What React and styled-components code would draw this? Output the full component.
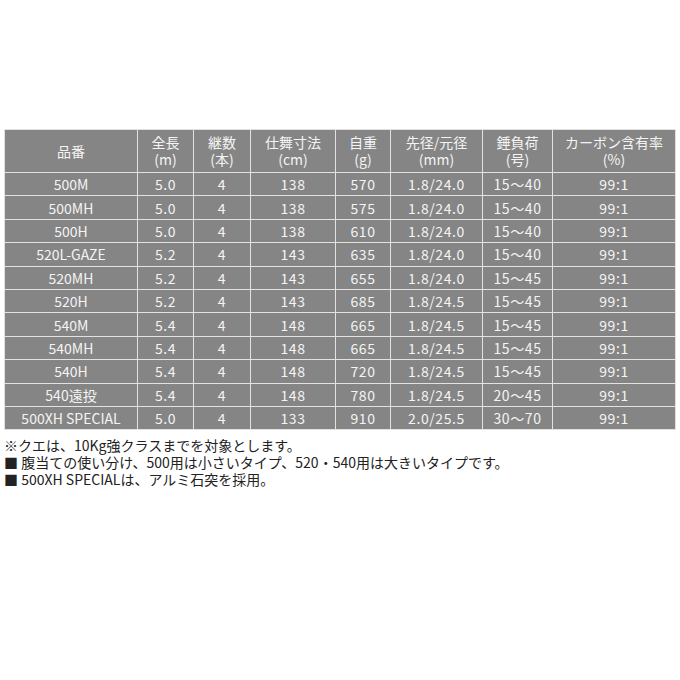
import styled, { createGlobalStyle } from "styled-components";

const GlobalStyle = createGlobalStyle`
  html, body {
    margin: 0;
    padding: 0;
    background: #fff;
  }
  body {
    font-family: "Noto Sans CJK JP", "Noto Sans", sans-serif;
  }
`;

const columns = [
  { key: "name", label: ["品番"], width: 133 },
  { key: "len", label: ["全長", "(m)"], width: 56 },
  { key: "pcs", label: ["継数", "(本)"], width: 57 },
  { key: "close", label: ["仕舞寸法", "(cm)"], width: 85 },
  { key: "weight", label: ["自重", "(g)"], width: 55 },
  { key: "dia", label: ["先径/元径", "(mm)"], width: 92 },
  { key: "sinker", label: ["錘負荷", "(号)"], width: 70 },
  { key: "carbon", label: ["カーボン含有率", "(%)"], width: 123 },
];

const rows = [
  ["500M", "5.0", "4", "138", "570", "1.8/24.0", "15〜40", "99:1"],
  ["500MH", "5.0", "4", "138", "575", "1.8/24.0", "15〜40", "99:1"],
  ["500H", "5.0", "4", "138", "610", "1.8/24.0", "15〜40", "99:1"],
  ["520L-GAZE", "5.2", "4", "143", "635", "1.8/24.0", "15〜40", "99:1"],
  ["520MH", "5.2", "4", "143", "655", "1.8/24.0", "15〜45", "99:1"],
  ["520H", "5.2", "4", "143", "685", "1.8/24.5", "15〜45", "99:1"],
  ["540M", "5.4", "4", "148", "665", "1.8/24.5", "15〜45", "99:1"],
  ["540MH", "5.4", "4", "148", "665", "1.8/24.5", "15〜45", "99:1"],
  ["540H", "5.4", "4", "148", "720", "1.8/24.5", "15〜45", "99:1"],
  ["540遠投", "5.4", "4", "148", "780", "1.8/24.5", "20〜45", "99:1"],
  ["500XH SPECIAL", "5.0", "4", "133", "910", "2.0/25.5", "30〜70", "99:1"],
];

const notes = [
  "※クエは、10Kg強クラスまでを対象とします。",
  "■ 腹当ての使い分け、500用は小さいタイプ、520・540用は大きいタイプです。",
  "■ 500XH SPECIALは、アルミ石突を採用。",
];

const Page = styled.div`
  padding: 129px 5px 0 4px;
`;

const SpecTable = styled.table`
  width: 671px;
  border-collapse: collapse;
  table-layout: fixed;
  color: #f4f4f4;
`;

const HeadCell = styled.th`
  height: 42px;
  padding: 0;
  background: #858585;
  border: 1.5px solid #e2e2e2;
  font-size: 14px;
  font-weight: 400;
  line-height: 17px;
  text-align: center;
  vertical-align: middle;
`;

const HeadLine = styled.div`
  height: 17px;
  white-space: nowrap;
`;

const Cell = styled.td`
  height: 22.4px;
  padding: 0;
  background: #858585;
  border: 1.5px solid #e2e2e2;
  font-size: 14px;
  line-height: 18px;
  letter-spacing: ${(p) => (p.$name ? "0" : "0.6px")};
  text-align: center;
  vertical-align: middle;
  white-space: nowrap;
`;

const Notes = styled.div`
  margin-top: 7px;
  display: flex;
  flex-direction: column;
  color: #222;
  font-size: 14px;
  line-height: 17px;
`;

export default function App() {
  return (
    <>
      <GlobalStyle />
      <Page>
        <SpecTable>
          <colgroup>
            {columns.map((c) => (
              <col key={c.key} style={{ width: c.width }} />
            ))}
          </colgroup>
          <thead>
            <tr>
              {columns.map((c) => (
                <HeadCell key={c.key}>
                  {c.label.map((l, i) => (
                    <HeadLine key={i}>{l}</HeadLine>
                  ))}
                </HeadCell>
              ))}
            </tr>
          </thead>
          <tbody>
            {rows.map((r) => (
              <tr key={r[0]}>
                {r.map((v, i) => (
                  <Cell key={i} $name={i === 0}>
                    {v}
                  </Cell>
                ))}
              </tr>
            ))}
          </tbody>
        </SpecTable>
        <Notes>
          {notes.map((n) => (
            <div key={n}>{n}</div>
          ))}
        </Notes>
      </Page>
    </>
  );
}
